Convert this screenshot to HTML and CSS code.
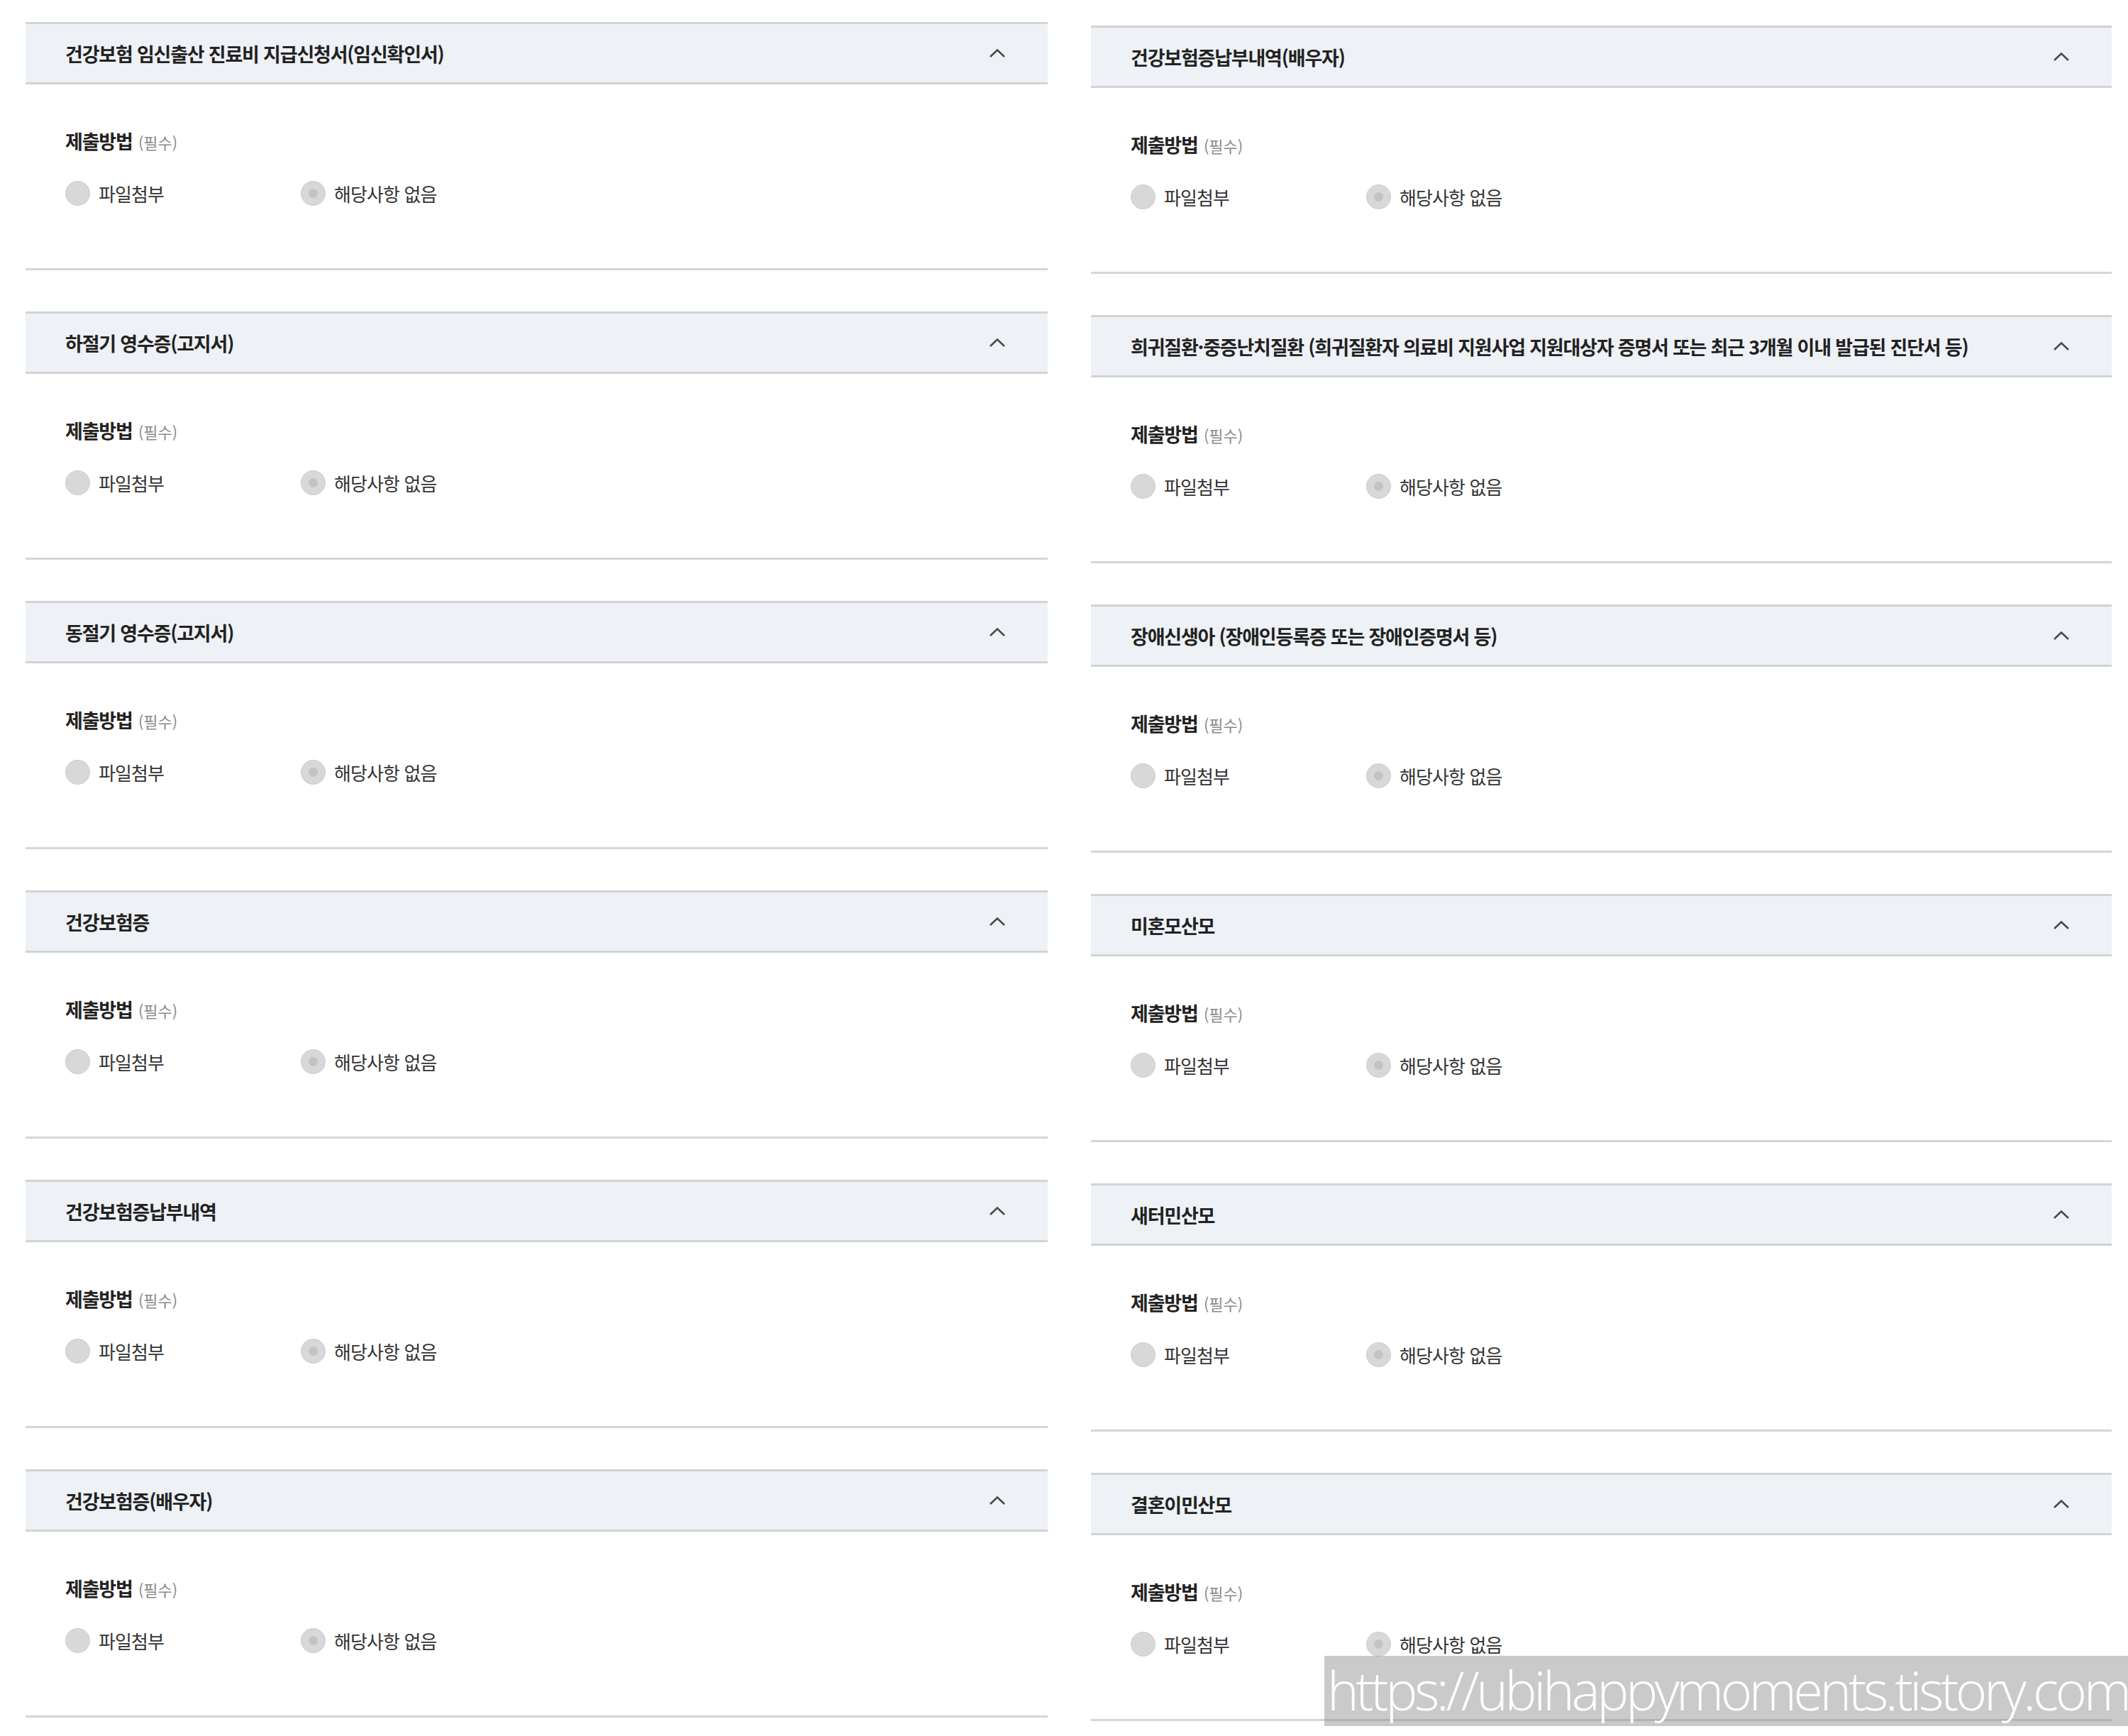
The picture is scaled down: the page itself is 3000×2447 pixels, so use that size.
FILE: index.html
```html
<!DOCTYPE html>
<html lang="ko">
  <head>
    <meta charset="UTF-8" />
    <meta name="viewport" content="width=device-width, initial-scale=1.0" />
    <title>제출서류</title>
    <link rel="stylesheet" href="styles.css">
  </head>
  <body>
    <div class="page">
      <div class="col col-left">
        <div class="doc">
          <div class="doc-head">
            <span class="doc-title">건강보험 임신출산 진료비 지급신청서(임신확인서)</span>
            <svg class="chevron" viewBox="0 0 24 14"><polyline points="2,12 12,2.5 22,12" /></svg>
          </div>
          <div class="doc-body">
            <div class="field-label">제출방법 <span class="req">(필수)</span></div>
            <div class="options">
              <span class="option"><span class="radio"></span>파일첨부</span>
              <span class="option"><span class="radio dot"></span>해당사항 없음</span>
            </div>
          </div>
        </div>
        <div class="doc">
          <div class="doc-head">
            <span class="doc-title">하절기 영수증(고지서)</span>
            <svg class="chevron" viewBox="0 0 24 14"><polyline points="2,12 12,2.5 22,12" /></svg>
          </div>
          <div class="doc-body">
            <div class="field-label">제출방법 <span class="req">(필수)</span></div>
            <div class="options">
              <span class="option"><span class="radio"></span>파일첨부</span>
              <span class="option"><span class="radio dot"></span>해당사항 없음</span>
            </div>
          </div>
        </div>
        <div class="doc">
          <div class="doc-head">
            <span class="doc-title">동절기 영수증(고지서)</span>
            <svg class="chevron" viewBox="0 0 24 14"><polyline points="2,12 12,2.5 22,12" /></svg>
          </div>
          <div class="doc-body">
            <div class="field-label">제출방법 <span class="req">(필수)</span></div>
            <div class="options">
              <span class="option"><span class="radio"></span>파일첨부</span>
              <span class="option"><span class="radio dot"></span>해당사항 없음</span>
            </div>
          </div>
        </div>
        <div class="doc">
          <div class="doc-head">
            <span class="doc-title">건강보험증</span>
            <svg class="chevron" viewBox="0 0 24 14"><polyline points="2,12 12,2.5 22,12" /></svg>
          </div>
          <div class="doc-body">
            <div class="field-label">제출방법 <span class="req">(필수)</span></div>
            <div class="options">
              <span class="option"><span class="radio"></span>파일첨부</span>
              <span class="option"><span class="radio dot"></span>해당사항 없음</span>
            </div>
          </div>
        </div>
        <div class="doc">
          <div class="doc-head">
            <span class="doc-title">건강보험증납부내역</span>
            <svg class="chevron" viewBox="0 0 24 14"><polyline points="2,12 12,2.5 22,12" /></svg>
          </div>
          <div class="doc-body">
            <div class="field-label">제출방법 <span class="req">(필수)</span></div>
            <div class="options">
              <span class="option"><span class="radio"></span>파일첨부</span>
              <span class="option"><span class="radio dot"></span>해당사항 없음</span>
            </div>
          </div>
        </div>
        <div class="doc">
          <div class="doc-head">
            <span class="doc-title">건강보험증(배우자)</span>
            <svg class="chevron" viewBox="0 0 24 14"><polyline points="2,12 12,2.5 22,12" /></svg>
          </div>
          <div class="doc-body">
            <div class="field-label">제출방법 <span class="req">(필수)</span></div>
            <div class="options">
              <span class="option"><span class="radio"></span>파일첨부</span>
              <span class="option"><span class="radio dot"></span>해당사항 없음</span>
            </div>
          </div>
        </div>
      </div>

      <div class="col col-right">
        <div class="doc">
          <div class="doc-head">
            <span class="doc-title">건강보험증납부내역(배우자)</span>
            <svg class="chevron" viewBox="0 0 24 14"><polyline points="2,12 12,2.5 22,12" /></svg>
          </div>
          <div class="doc-body">
            <div class="field-label">제출방법 <span class="req">(필수)</span></div>
            <div class="options">
              <span class="option"><span class="radio"></span>파일첨부</span>
              <span class="option"><span class="radio dot"></span>해당사항 없음</span>
            </div>
          </div>
        </div>
        <div class="doc">
          <div class="doc-head">
            <span class="doc-title">희귀질환·중증난치질환 (희귀질환자 의료비 지원사업 지원대상자 증명서 또는 최근 3개월 이내 발급된 진단서 등)</span>
            <svg class="chevron" viewBox="0 0 24 14"><polyline points="2,12 12,2.5 22,12" /></svg>
          </div>
          <div class="doc-body">
            <div class="field-label">제출방법 <span class="req">(필수)</span></div>
            <div class="options">
              <span class="option"><span class="radio"></span>파일첨부</span>
              <span class="option"><span class="radio dot"></span>해당사항 없음</span>
            </div>
          </div>
        </div>
        <div class="doc">
          <div class="doc-head">
            <span class="doc-title">장애신생아 (장애인등록증 또는 장애인증명서 등)</span>
            <svg class="chevron" viewBox="0 0 24 14"><polyline points="2,12 12,2.5 22,12" /></svg>
          </div>
          <div class="doc-body">
            <div class="field-label">제출방법 <span class="req">(필수)</span></div>
            <div class="options">
              <span class="option"><span class="radio"></span>파일첨부</span>
              <span class="option"><span class="radio dot"></span>해당사항 없음</span>
            </div>
          </div>
        </div>
        <div class="doc">
          <div class="doc-head">
            <span class="doc-title">미혼모산모</span>
            <svg class="chevron" viewBox="0 0 24 14"><polyline points="2,12 12,2.5 22,12" /></svg>
          </div>
          <div class="doc-body">
            <div class="field-label">제출방법 <span class="req">(필수)</span></div>
            <div class="options">
              <span class="option"><span class="radio"></span>파일첨부</span>
              <span class="option"><span class="radio dot"></span>해당사항 없음</span>
            </div>
          </div>
        </div>
        <div class="doc">
          <div class="doc-head">
            <span class="doc-title">새터민산모</span>
            <svg class="chevron" viewBox="0 0 24 14"><polyline points="2,12 12,2.5 22,12" /></svg>
          </div>
          <div class="doc-body">
            <div class="field-label">제출방법 <span class="req">(필수)</span></div>
            <div class="options">
              <span class="option"><span class="radio"></span>파일첨부</span>
              <span class="option"><span class="radio dot"></span>해당사항 없음</span>
            </div>
          </div>
        </div>
        <div class="doc">
          <div class="doc-head">
            <span class="doc-title">결혼이민산모</span>
            <svg class="chevron" viewBox="0 0 24 14"><polyline points="2,12 12,2.5 22,12" /></svg>
          </div>
          <div class="doc-body">
            <div class="field-label">제출방법 <span class="req">(필수)</span></div>
            <div class="options">
              <span class="option"><span class="radio"></span>파일첨부</span>
              <span class="option"><span class="radio dot"></span>해당사항 없음</span>
            </div>
          </div>
        </div>
      </div>

      <div class="watermark">https://ubihappymoments.tistory.com</div>
    </div>
  </body>
</html>
```

FILE: styles.css
```css
body {
  margin: 0;
  background: #fff;
  font-family: "Noto Sans CJK KR", "Noto Sans", sans-serif;
  color: #222;
}
.page {
  position: relative;
  display: flex;
  gap: 61px;
  width: 3000px;
  height: 2447px;
  padding: 31px 0 0 36px;
  box-sizing: border-box;
  overflow: hidden;
}
.col {
  display: flex;
  flex-direction: column;
}
.col-left {
  width: 1441px;
}
.col-right {
  width: 1439px;
  margin-top: 5px;
}
.doc {
  margin-bottom: 58px;
}
.doc-head {
  display: flex;
  align-items: center;
  justify-content: space-between;
  height: 82px;
  padding: 0 59px 0 56px;
  background: #eef1f5;
  border-top: 3px solid #d2d3d5;
  border-bottom: 3px solid #d2d3d5;
}
.doc-title {
  font-size: 27px;
  font-weight: 700;
  letter-spacing: -1.2px;
  color: #222;
}
.chevron {
  width: 24px;
  height: 14px;
}
.chevron polyline {
  fill: none;
  stroke: #4a4a4a;
  stroke-width: 2.6;
}
.doc-body {
  height: 262px;
  padding-left: 56px;
  border-bottom: 3px solid #d6d6d6;
  box-sizing: border-box;
  padding-top: 62px;
}
.field-label {
  height: 36px;
  line-height: 36px;
  font-size: 27px;
  font-weight: 700;
  letter-spacing: -1.2px;
  color: #222;
}
.req {
  margin-left: 2px;
  font-size: 22px;
  font-weight: 400;
  letter-spacing: 0;
  color: #8a8a8a;
}
.options {
  display: flex;
  margin-top: 37px;
  height: 36px;
}
.option {
  display: flex;
  align-items: center;
  gap: 12px;
  width: 332px;
  font-size: 26px;
  letter-spacing: -0.9px;
  color: #333;
}
.radio {
  position: relative;
  width: 33px;
  height: 33px;
  border-radius: 50%;
  background: #d8d8d8;
  border: 1px solid #cdcdcd;
  flex-shrink: 0;
}
.radio.dot::after {
  content: "";
  position: absolute;
  left: 10px;
  top: 10px;
  width: 13px;
  height: 13px;
  border-radius: 50%;
  background: #c3c3c3;
}
.watermark {
  position: absolute;
  left: 1867px;
  top: 2334px;
  width: 1133px;
  height: 99px;
  background: rgba(128, 128, 128, 0.42);
  color: #fff;
  font-family: "Open Sans", sans-serif;
  font-weight: 300;
  font-size: 76px;
  letter-spacing: -4.5px;
  line-height: 96px;
  white-space: nowrap;
  padding-left: 4px;
  box-sizing: border-box;
}
```
